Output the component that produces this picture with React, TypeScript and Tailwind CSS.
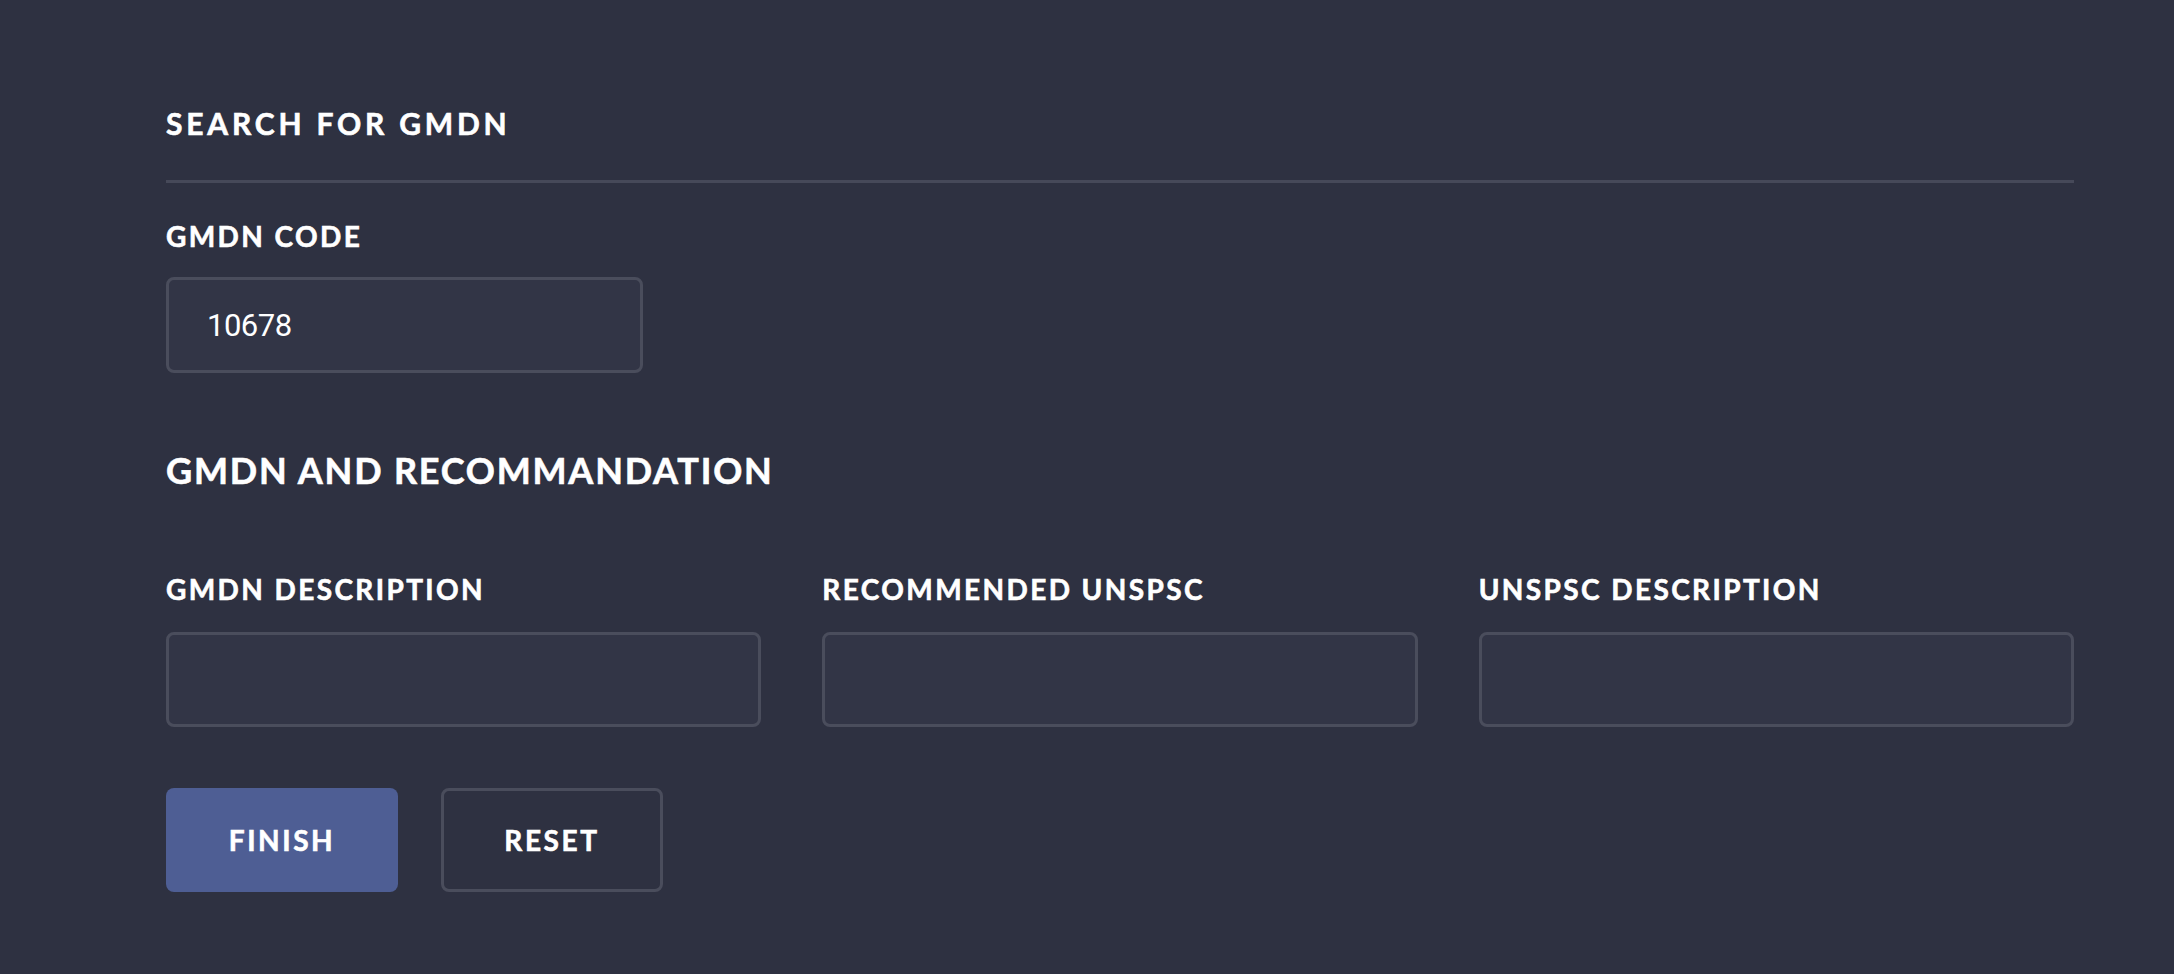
import { useState } from "react";

const heavy = "font-bold [-webkit-text-stroke:0.6px_white]";
const labelCls = `block text-[28px] leading-[28px] ${heavy} tracking-[2.4px] text-white`;
const boxCls =
  "w-full h-[96px] rounded-[8px] border-[3px] border-[#4a4d5c] bg-[#323546] px-[38px] text-[31px] text-white outline-none";

export default function App() {
  const [code, setCode] = useState("10678");
  const [gmdnDesc, setGmdnDesc] = useState("");
  const [unspsc, setUnspsc] = useState("");
  const [unspscDesc, setUnspscDesc] = useState("");

  function handleReset() {
    setCode("");
    setGmdnDesc("");
    setUnspsc("");
    setUnspscDesc("");
  }

  return (
    <div
      className="min-h-screen bg-[#2e3141] pl-[166px] pr-[100px] pt-[108px] pb-[60px]"
      style={{ fontFamily: "Lato, 'Noto Sans', sans-serif" }}
    >
      <h2 className={`text-[30px] leading-[30px] ${heavy} tracking-[3.8px] text-white pb-[42px] border-b-[3px] border-[#464959]`}>
        SEARCH FOR GMDN
      </h2>

      <div className="mt-[39px]">
        <label className={labelCls}>GMDN CODE</label>
        <input
          value={code}
          onChange={(e) => setCode(e.target.value)}
          className={`${boxCls} mt-[27px] !w-[477px] font-['Roboto',sans-serif] tracking-[-0.5px]`}
        />
      </div>

      <h2 className={`mt-[79px] text-[36px] leading-[36px] ${heavy} tracking-[1.8px] text-white`}>
        GMDN AND RECOMMANDATION
      </h2>

      <div className="mt-[87px] grid grid-cols-3 gap-x-[61px]">
        <div>
          <label className={labelCls}>GMDN DESCRIPTION</label>
          <input
            value={gmdnDesc}
            onChange={(e) => setGmdnDesc(e.target.value)}
            className={`${boxCls} mt-[29px] !h-[95px]`}
          />
        </div>
        <div>
          <label className={labelCls}>RECOMMENDED UNSPSC</label>
          <input
            value={unspsc}
            onChange={(e) => setUnspsc(e.target.value)}
            className={`${boxCls} mt-[29px] !h-[95px]`}
          />
        </div>
        <div>
          <label className={labelCls}>UNSPSC DESCRIPTION</label>
          <input
            value={unspscDesc}
            onChange={(e) => setUnspscDesc(e.target.value)}
            className={`${boxCls} mt-[29px] !h-[95px]`}
          />
        </div>
      </div>

      <div className="mt-[61px] flex gap-[43px]">
        <button
          type="button"
          className={`w-[232px] h-[104px] rounded-[8px] bg-[#4e5e94] text-[28px] ${heavy} tracking-[2.6px] text-white`}
        >
          FINISH
        </button>
        <button
          type="button"
          onClick={handleReset}
          className={`w-[222px] h-[104px] rounded-[8px] border-[3px] border-[#4a4d5c] bg-transparent text-[28px] ${heavy} tracking-[2.6px] text-white`}
        >
          RESET
        </button>
      </div>
    </div>
  );
}
